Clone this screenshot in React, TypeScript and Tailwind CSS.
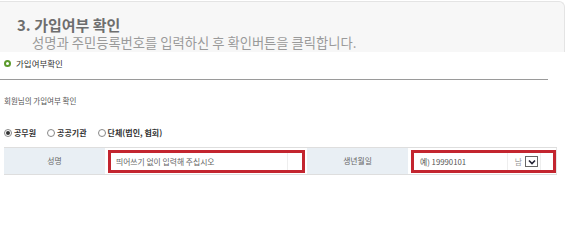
const FONT = { fontFamily: '"Noto Sans CJK KR", "Noto Sans", sans-serif' };

function Radio({ checked, label }: { checked?: boolean; label: string }) {
  return (
    <label className="flex items-center gap-[2px]">
      <span className="flex items-center justify-center w-[8px] h-[8px] rounded-full border border-[#888] bg-white">
        {checked && <span className="w-[4px] h-[4px] rounded-full bg-[#333]" />}
      </span>
      <span className="text-[8px] font-bold text-[#333] leading-none">{label}</span>
    </label>
  );
}

export default function App() {
  return (
    <div className="w-[568px] h-[207px] bg-white overflow-hidden" style={FONT}>
      {/* step header panel */}
      <div className="h-[51px] mt-px mr-[3px] bg-[#f7f7f7] border-t border-r border-[#e4e4e4] rounded-tr-[6px] pl-[17px] pt-[14px]">
        <h2 className="text-[15px] font-bold text-[#6e6e6e] leading-[18px]">3. 가입여부 확인</h2>
        <p className="pl-[15px] text-[13.3px] text-[#9a9a9a] leading-[18px]">
          성명과 주민등록번호를 입력하신 후 확인버튼을 클릭합니다.
        </p>
      </div>

      <div className="pr-[20px]">
        <div className="flex items-start gap-[5px] pl-[4px] pt-[6px] h-[28px] border-b border-[#9a9a9a]">
          <span className="mt-[2px] w-[7px] h-[7px] rounded-full border-2 border-[#5c9a2c]" />
          <span className="text-[8.5px] text-[#333] leading-[11px]">가입여부확인</span>
        </div>
      </div>

      <p className="pl-[4px] pt-[16px] text-[7.5px] text-[#555] leading-[10px]">회원님의 가입여부 확인</p>

      <div className="flex items-center gap-[11px] pl-[4px] mt-[22px] h-[10px]">
        <Radio checked label="공무원" />
        <Radio label="공공기관" />
        <Radio label="단체(법인, 협회)" />
      </div>

      <div className="ml-[4px] mt-[9px] w-[553px] h-[28px] flex border-t border-b border-[#dedede] text-[7.8px] text-[#666]">
        <div className="w-[101px] bg-[#e9eff4] flex items-center justify-center">성명</div>
        <div className="w-[202px] pl-[3px] pt-[2px]">
          <div className="w-[197px] h-[23px] border-[3px] border-[#c3252f] bg-white flex items-center">
            <div className="w-[177px] h-full border-r border-[#eeeeee] flex items-center pl-[5px] text-[#666]">
              띄어쓰기 없이 입력해 주십시오
            </div>
          </div>
        </div>
        <div className="w-[101px] bg-[#e9eff4] flex items-center justify-center">생년월일</div>
        <div className="flex-1 pl-[3px] pt-[2px] border-r border-[#e6e6e6]">
          <div className="w-[145px] h-[23px] border-[3px] border-[#c3252f] bg-white flex items-center">
            <div className="w-[94px] h-full border-r border-[#eeeeee] flex items-center pl-[6px] text-[#555]">
              예) 19990101
            </div>
            <div className="w-[33px] h-full border-r border-[#eeeeee] flex items-center justify-end gap-[3px] pr-[2px] text-[#999]">
              <span>남</span>
              <span className="w-[13px] h-[11px] border border-[#666] bg-white flex items-center justify-center">
                <svg width="8" height="6" viewBox="0 0 8 6">
                  <path d="M1 1.5 L4 4.5 L7 1.5" fill="none" stroke="#223" strokeWidth="1.6" />
                </svg>
              </span>
            </div>
          </div>
        </div>
      </div>
    </div>
  );
}
